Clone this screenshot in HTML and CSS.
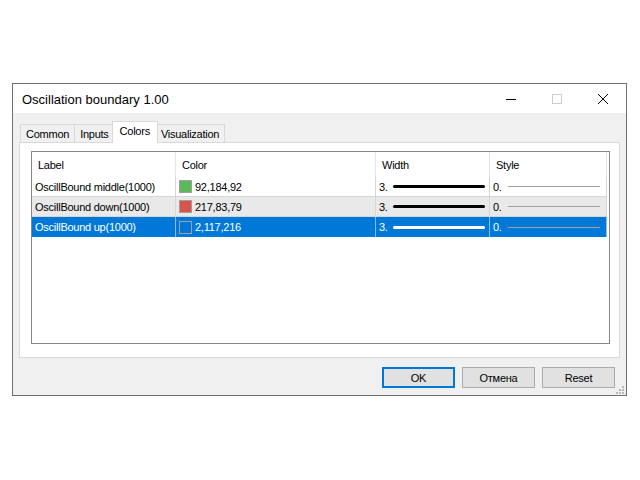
FILE: index.html
```html
<!DOCTYPE html>
<html lang="en">
<head>
  <meta charset="UTF-8">
  <title>Oscillation boundary 1.00</title>
  <link rel="stylesheet" href="styles.css">
</head>
<body>
  <div class="window">
    <div class="titlebar">
      <span class="title">Oscillation boundary 1.00</span>
      <div class="controls">
        <span class="ctl min"><svg width="10" height="10" viewBox="0 0 10 10"><path d="M0 5.5H10" stroke="#000" stroke-width="1"/></svg></span>
        <span class="ctl max"><svg width="10" height="10" viewBox="0 0 10 10"><rect x="0.5" y="0.5" width="9" height="9" fill="none" stroke="#cccccc" stroke-width="1"/></svg></span>
        <span class="ctl close"><svg width="10" height="10" viewBox="0 0 10 10"><path d="M0 0L10 10M10 0L0 10" stroke="#000" stroke-width="1"/></svg></span>
      </div>
    </div>

    <div class="content">
      <div class="tabs">
        <div class="tab">Common</div>
        <div class="tab">Inputs</div>
        <div class="tab active">Colors</div>
        <div class="tab">Visualization</div>
      </div>

      <div class="panel">
        <div class="list">
          <div class="list-head">
            <div class="cell">Label</div>
            <div class="cell">Color</div>
            <div class="cell">Width</div>
            <div class="cell">Style</div>
          </div>

          <div class="list-row">
            <div class="cell">OscillBound middle(1000)</div>
            <div class="cell"><span class="swatch" style="background-color: rgb(92,184,92)"></span>92,184,92</div>
            <div class="cell">3.<span class="line-thick"></span></div>
            <div class="cell">0.<span class="line-thin"></span></div>
          </div>

          <div class="list-row alt">
            <div class="cell">OscillBound down(1000)</div>
            <div class="cell"><span class="swatch" style="background-color: rgb(217,83,79)"></span>217,83,79</div>
            <div class="cell">3.<span class="line-thick"></span></div>
            <div class="cell">0.<span class="line-thin"></span></div>
          </div>

          <div class="list-row selected">
            <div class="cell">OscillBound up(1000)</div>
            <div class="cell"><span class="swatch" style="background-color: rgb(2,117,216)"></span>2,117,216</div>
            <div class="cell">3.<span class="line-thick"></span></div>
            <div class="cell">0.<span class="line-thin"></span></div>
          </div>
        </div>
      </div>

      <div class="buttons">
        <button class="btn default">OK</button>
        <button class="btn">Отмена</button>
        <button class="btn">Reset</button>
      </div>

      <svg class="grip" width="9" height="9" viewBox="0 0 9 9">
        <rect x="6" y="0" width="2" height="2" fill="#b8b8b8"/>
        <rect x="3" y="3" width="2" height="2" fill="#b8b8b8"/>
        <rect x="6" y="3" width="2" height="2" fill="#b8b8b8"/>
        <rect x="0" y="6" width="2" height="2" fill="#b8b8b8"/>
        <rect x="3" y="6" width="2" height="2" fill="#b8b8b8"/>
        <rect x="6" y="6" width="2" height="2" fill="#b8b8b8"/>
      </svg>
    </div>
  </div>
</body>
</html>
```

FILE: styles.css
```css
body {
  margin: 0;
  padding: 83px 0 0 12px;
  background-color: #ffffff;
  font-family: "Liberation Sans", Arial, sans-serif;
  font-size: 11px;
  letter-spacing: -0.25px;
  color: #000000;
}

.window {
  width: 613px;
  height: 311px;
  border: 1px solid #6f6f6f;
  display: flex;
  flex-direction: column;
  background-color: #f0f0f0;
}

.titlebar {
  height: 29px;
  background-color: #ffffff;
  display: flex;
  align-items: center;
  justify-content: space-between;
  padding-left: 9px;
}

.title {
  font-size: 13px;
  letter-spacing: 0;
  padding-top: 1px;
}

.controls {
  display: flex;
  height: 100%;
}

.ctl {
  width: 46px;
  display: flex;
  align-items: center;
  justify-content: center;
}

.content {
  flex: 1;
  position: relative;
  padding: 8px 6px 0 6px;
  display: flex;
  flex-direction: column;
}

.tabs {
  display: flex;
  align-items: flex-end;
  height: 21px;
  padding-left: 1px;
}

.tab {
  height: 17px;
  line-height: 18px;
  padding: 0 5px;
  border: 1px solid #d9d9d9;
  border-bottom: none;
  margin-right: -1px;
  background-color: #f0f0f0;
}

.tab.active {
  position: relative;
  z-index: 1;
  height: 21px;
  line-height: 19px;
  margin: 0 -3px -1px -2px;
  padding: 0 7px;
  background-color: #ffffff;
}

.panel {
  height: 216px;
  box-sizing: border-box;
  border: 1px solid #d9d9d9;
  background-color: #ffffff;
  padding: 8px 9px 13px 11px;
}

.list {
  height: 193px;
  box-sizing: border-box;
  border: 1px solid #828790;
  background-color: #ffffff;
}

.list-head, .list-row {
  display: grid;
  grid-template-columns: 144px 200px 114px 117px;
}

.list-head {
  height: 25px;
}

.list-head .cell {
  padding-left: 6px;
  line-height: 26px;
  border-right: 1px solid #e5e5e5;
}

.list-row {
  height: 20px;
  box-sizing: border-box;
  border-bottom: 1px solid #d6d6d6;
  width: 575px;
}

.list-row .cell {
  display: flex;
  align-items: center;
  padding-left: 3px;
  border-right: 1px solid #d6d6d6;
  white-space: nowrap;
}

.list-row.alt {
  background-color: #e9e9e9;
}

.list-row.selected {
  background-color: #0078d7;
  color: #ffffff;
  border-bottom: none;
}

.list-row.selected .cell {
  border-right-color: #8cbbe6;
}

.swatch {
  width: 11px;
  height: 11px;
  border: 1px solid #a0a0a0;
  margin-right: 3px;
}

.line-thick {
  width: 92px;
  height: 3px;
  border-radius: 2px;
  background-color: #000000;
  margin-left: 5px;
}

.selected .line-thick {
  background-color: #ffffff;
}

.line-thin {
  width: 92px;
  height: 1px;
  background-color: #a0a0a0;
  margin-left: 6px;
}

.buttons {
  display: flex;
  justify-content: flex-end;
  gap: 7px;
  margin-top: 9px;
  padding-right: 5px;
}

.btn {
  width: 73px;
  height: 21px;
  border: 1px solid #adadad;
  background-color: #e1e1e1;
  font-family: "Liberation Sans", Arial, sans-serif;
  font-size: 11px;
  letter-spacing: -0.25px;
  color: #000000;
  padding: 0;
}

.btn.default {
  border: 2px solid #0078d7;
}

.grip {
  position: absolute;
  right: 1px;
  bottom: 0;
}
```
